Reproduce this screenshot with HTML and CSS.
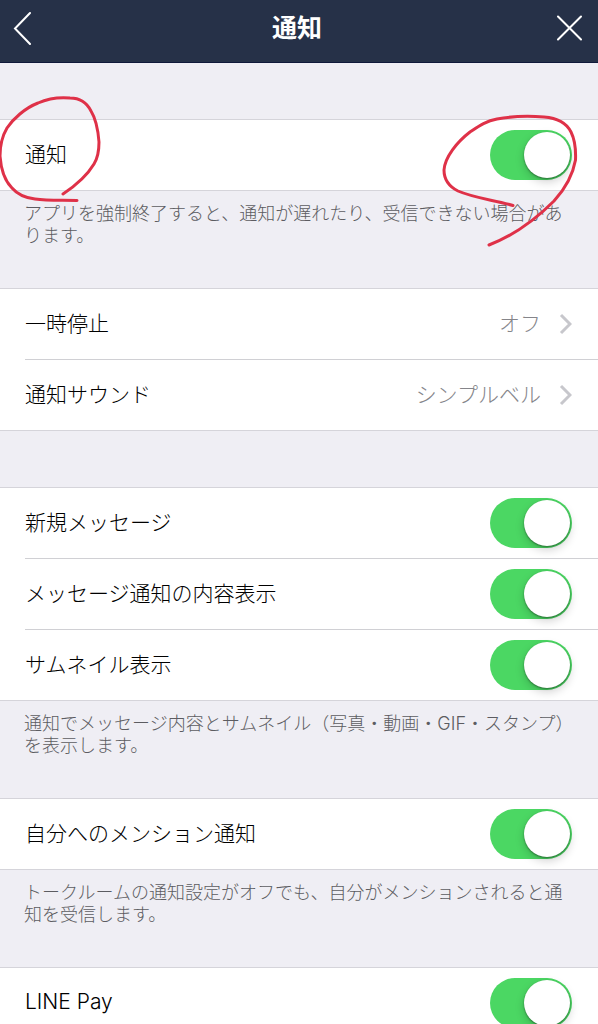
FILE: index.html
```html
<!DOCTYPE html>
<html lang="ja">
<head>
<meta charset="utf-8">
<meta name="viewport" content="width=device-width, initial-scale=1">
<title>通知</title>
<link rel="stylesheet" href="styles.css">
</head>
<body>
<div class="app">
  <header class="navbar">
    <button class="nav-button" type="button" aria-label="戻る">
      <svg width="20" height="34" viewBox="0 0 20 34" aria-hidden="true"><path class="nav-stroke" d="M18 2 3 17.500 18 33"/></svg>
    </button>
    <h1 class="title">通知</h1>
    <button class="nav-button nav-close" type="button" aria-label="閉じる">
      <svg width="26" height="26" viewBox="0 0 26 26" aria-hidden="true"><path class="nav-stroke" d="M2 1.500 25 24.500M25 1.500 2 24.500"/></svg>
    </button>
  </header>

  <main class="settings">
    <section class="group">
      <div class="row marked">
        <label class="label" for="all">通知</label>
        <input class="switch" type="checkbox" role="switch" id="all" checked>
        <svg class="ink ink-left" width="110" height="120" viewBox="0 90 110 120" aria-hidden="true">
          <path d="M63 194C75 186 88 174 94 164C99 156 99 148 99 142C98 129 96 119 91 111C87 103 80 98 70 98C59 97 47 99 38 103C25 108 13 119 7 128C1 138 0 146 0 156C1 170 5 181 12 188C18 195 26 198 35 199C48 201 62 200 77 200.500"/>
        </svg>
        <svg class="ink ink-right" width="160" height="145" viewBox="438 110 160 145" aria-hidden="true">
          <path d="M513 205.500C494 200 474 198 458 191C448 186 444 179 444 170C445 157 457 142 470 132C479 126 486 121 497 119C513 116 531 116 544 117C558 118 567 124 571 132C575 140 576 148 575.500 160C573 174 565 189 554 201C538 217 515 235 489 245"/>
        </svg>
      </div>
    </section>
    <p class="note">アプリを強制終了すると、通知が遅れたり、受信できない場合があります。</p>

    <section class="group">
      <a class="row" href="#pause">
        <span class="label">一時停止</span>
        <span class="value">オフ</span>
        <svg class="chevron" width="13" height="22" viewBox="0 0 13 22" aria-hidden="true"><path d="M2 2 11 11 2 20"/></svg>
      </a>
      <a class="row" href="#sound">
        <span class="label">通知サウンド</span>
        <span class="value">シンプルベル</span>
        <svg class="chevron" width="13" height="22" viewBox="0 0 13 22" aria-hidden="true"><path d="M2 2 11 11 2 20"/></svg>
      </a>
    </section>

    <section class="group spaced">
      <div class="row">
        <label class="label" for="new-message">新規メッセージ</label>
        <input class="switch" type="checkbox" role="switch" id="new-message" checked>
      </div>
      <div class="row">
        <label class="label" for="preview">メッセージ通知の内容表示</label>
        <input class="switch" type="checkbox" role="switch" id="preview" checked>
      </div>
      <div class="row">
        <label class="label" for="thumbnail">サムネイル表示</label>
        <input class="switch" type="checkbox" role="switch" id="thumbnail" checked>
      </div>
    </section>
    <p class="note">通知でメッセージ内容とサムネイル（写真・動画・GIF・スタンプ）を表示します。</p>

    <section class="group">
      <div class="row">
        <label class="label" for="mention">自分へのメンション通知</label>
        <input class="switch" type="checkbox" role="switch" id="mention" checked>
      </div>
    </section>
    <p class="note">トークルームの通知設定がオフでも、自分がメンションされると通知を受信します。</p>

    <section class="group">
      <div class="row">
        <label class="label" for="pay">LINE Pay</label>
        <input class="switch" type="checkbox" role="switch" id="pay" checked>
      </div>
    </section>
  </main>
</div>
</body>
</html>
```
FILE: styles.css
```css
* {
  box-sizing: border-box;
}

body {
  margin: 0;
  background: #efeef4;
  color: #000;
  font-family: Inter, "Noto Sans CJK JP", sans-serif;
  font-size: 21px;
  font-weight: 300;
}

.app {
  display: flex;
  flex-direction: column;
  height: 100vh;
}

.navbar {
  display: grid;
  flex: none;
  grid-template-columns: 1fr auto 1fr;
  align-items: center;
  padding: 0 16px 6px 12px;
  border-bottom: 1px solid #10193a;
  background: #263148;
  color: #fff;
}

.nav-button {
  display: flex;
  align-items: center;
  justify-self: start;
  height: 56px;
  padding: 0;
  border: 0;
  background: none;
}

.nav-close {
  justify-self: end;
}

.nav-stroke {
  fill: none;
  stroke: #fff;
  stroke-width: 2;
  stroke-linecap: round;
}

.title {
  margin: 0;
  font-size: 25px;
  font-weight: 700;
  line-height: 56px;
}

.settings {
  flex: 1;
  min-height: 0;
  padding-top: 56px;
  overflow: hidden auto;
  scrollbar-width: none;
}

.group {
  border: solid #d5d4da;
  border-width: 1px 0;
  background: #fff;
}

.spaced {
  margin-top: 56px;
}

.row {
  position: relative;
  display: flex;
  align-items: center;
  min-height: 70px;
  margin-left: 25px;
  padding-right: 26px;
  color: inherit;
  text-decoration: none;
}

.row + .row {
  min-height: 71px;
  border-top: 1px solid #d0d0d4;
}

.label,
.value {
  padding-bottom: 4px;
}

.label {
  flex: 1;
}

.value {
  margin-right: 18px;
  color: #85858a;
}

.chevron {
  fill: none;
  stroke: #c7c7cc;
  stroke-width: 3;
}

.note {
  min-height: 97px;
  margin: 0;
  padding: 12px 20px 0 24px;
  color: #5c5c61;
  font-size: 18px;
  line-height: 22px;
}

.switch {
  appearance: none;
  display: flex;
  width: 82px;
  height: 50px;
  margin: 0;
  padding: 2px;
  border-radius: 25px;
  background: #d8d8dc;
}

.switch::before {
  content: "";
  width: 46px;
  height: 46px;
  border-radius: 50%;
  background: #fff;
  box-shadow: 0 1px 2px rgba(0, 0, 0, 0.4), 0 4px 10px rgba(0, 0, 0, 0.18);
}

.switch:checked {
  justify-content: flex-end;
  background: #4bd763;
}

.marked {
  z-index: 1;
  margin-left: 0;
  padding-left: 25px;
}

.ink {
  position: absolute;
  fill: none;
  stroke: #df3148;
  stroke-width: 3;
  stroke-linecap: round;
  pointer-events: none;
}

.ink-left {
  top: -30px;
  left: 0;
}

.ink-right {
  top: -10px;
  right: 0;
}
```
